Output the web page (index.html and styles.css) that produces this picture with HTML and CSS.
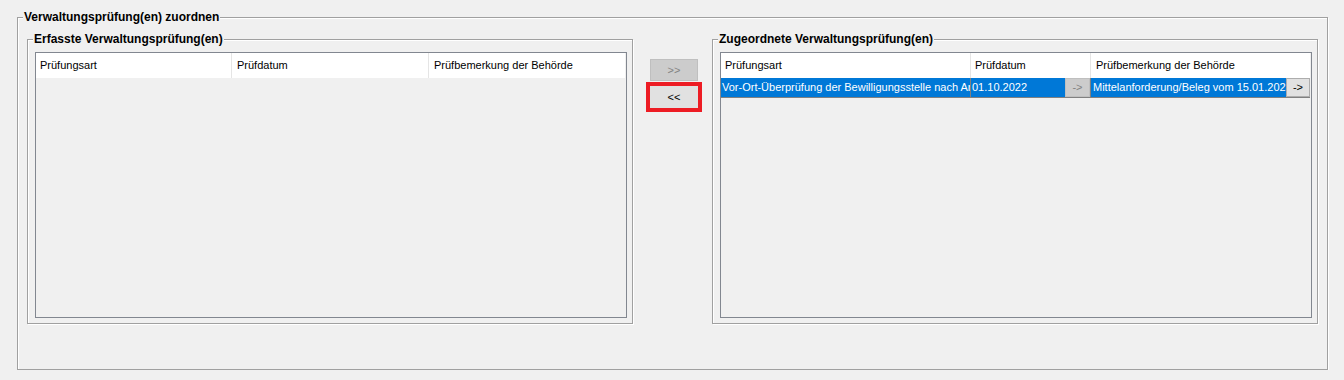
FILE: index.html
```html
<!DOCTYPE html>
<html lang="de">
<head>
    <meta charset="UTF-8">
    <meta name="viewport" content="width=device-width, initial-scale=1.0">
    <title>Verwaltungsprüfung(en) zuordnen</title>
    <link rel="stylesheet" href="styles.css">
</head>
<body>
    <fieldset class="group outer">
        <legend>Verwaltungsprüfung(en) zuordnen</legend>
        <div class="columns">
            <!-- Erfasste Prüfungen -->
            <fieldset class="group list-box">
                <legend>Erfasste Verwaltungsprüfung(en)</legend>
                <div class="table-pane">
                    <div class="table-head">
                        <div class="head-cell left-1">Prüfungsart</div>
                        <div class="head-cell left-2">Prüfdatum</div>
                        <div class="head-cell left-3">Prüfbemerkung der Behörde</div>
                    </div>
                </div>
            </fieldset>

            <div class="mover">
                <button class="move-button" type="button" disabled>&gt;&gt;</button>
                <span class="highlight">
                    <button class="move-button" type="button">&lt;&lt;</button>
                </span>
            </div>

            <!-- Zugeordnete Prüfungen -->
            <fieldset class="group list-box">
                <legend>Zugeordnete Verwaltungsprüfung(en)</legend>
                <div class="table-pane">
                    <div class="table-head">
                        <div class="head-cell right-1">Prüfungsart</div>
                        <div class="head-cell right-2">Prüfdatum</div>
                        <div class="head-cell right-3">Prüfbemerkung der Behörde</div>
                    </div>
                    <div class="table-row">
                        <div class="row-cell right-1">
                            <span class="cell-text">Vor-Ort-Überprüfung der Bewilligungsstelle nach Art. 58 VO (EU) 2021/1060</span>
                        </div>
                        <div class="row-cell right-2">
                            <span class="cell-text">01.10.2022</span>
                            <button class="cell-button" type="button" disabled>-&gt;</button>
                        </div>
                        <div class="row-cell right-3">
                            <span class="cell-text note">Mittelanforderung/Beleg vom 15.01.2023</span>
                            <button class="cell-button last" type="button">-&gt;</button>
                        </div>
                    </div>
                </div>
            </fieldset>
        </div>
    </fieldset>
</body>
</html>
```

FILE: styles.css
```css
body {
    margin: 0;
    background-color: #f0f0f0;
    font-family: "Liberation Sans", Arial, sans-serif;
    font-size: 11px;
    color: #000;
}

.group {
    margin: 0;
    min-width: 0;
    border: 1px solid #a0a0a0;
    box-shadow: inset 1px 1px 0 #fff, 1px 1px 0 #fff;
}

.group > legend {
    font-size: 12px;
    font-weight: bold;
    line-height: 14px;
    padding: 0 1px;
    background-color: #f0f0f0;
}

.outer {
    margin: 10px 16px 0 17px;
    padding: 8px 9px 45px 9px;
}

.outer > legend {
    margin-left: -4px;
}

.columns {
    display: grid;
    grid-template-columns: 606px 1fr 606px;
}

.list-box {
    padding: 6px 5px 5px 7px;
}

.list-box > legend {
    margin-left: -2px;
}

.table-pane {
    box-sizing: border-box;
    height: 266px;
    border: 1px solid #828790;
    background-color: #f0f0f0;
}

.table-head {
    display: flex;
    width: 589px;
    height: 25px;
    background-color: #fff;
}

.head-cell {
    box-sizing: border-box;
    line-height: 25px;
    padding-left: 5px;
    border-right: 1px solid #e5e5e5;
    white-space: nowrap;
    overflow: hidden;
}

.head-cell:first-child {
    padding-left: 4px;
}

.head-cell:last-child {
    border-right: none;
}

.left-1 { width: 196px; }
.left-2 { width: 197px; }
.left-3 { width: 196px; }

.right-1 { width: 250px; }
.right-2 { width: 120px; }
.right-3 { width: 219px; }

.table-head .right-2 {
    padding-left: 4px;
}

.table-row {
    display: flex;
    width: 589px;
    height: 20px;
}

.row-cell {
    box-sizing: border-box;
    display: flex;
    background-color: #0078d7;
    color: #fff;
    line-height: 19px;
    border-right: 1px solid #808080;
    border-bottom: 1px solid #808080;
}

.row-cell:last-child {
    border-right: none;
}

.cell-text {
    flex: 1;
    min-width: 0;
    padding-left: 1px;
    white-space: nowrap;
    overflow: hidden;
}

.cell-text.note {
    padding-left: 2px;
}

.cell-button {
    box-sizing: border-box;
    width: 25px;
    height: 19px;
    padding: 0;
    border: 1px solid #adadad;
    background-color: #e1e1e1;
    color: #000;
    font-family: "Liberation Sans", Arial, sans-serif;
    font-size: 11px;
    line-height: 17px;
}

.cell-button.last {
    width: 24px;
}

.cell-button:disabled {
    background-color: #cccccc;
    border-color: #bfbfbf;
    color: #838383;
}

.mover {
    display: flex;
    flex-direction: column;
    align-items: flex-start;
    gap: 1px;
    padding: 27px 0 0 17px;
}

.move-button {
    box-sizing: border-box;
    width: 48px;
    height: 22px;
    padding: 0;
    border: 1px solid #adadad;
    background-color: #e1e1e1;
    color: #000;
    font-family: "Liberation Sans", Arial, sans-serif;
    font-size: 11px;
}

.move-button:disabled {
    background-color: #cccccc;
    border-color: #bfbfbf;
    color: #838383;
}

.highlight {
    display: block;
    margin-left: -4px;
    border: 4px solid #ed1c24;
}

.highlight .move-button {
    display: block;
    border-color: #e1e1e1;
}
```
